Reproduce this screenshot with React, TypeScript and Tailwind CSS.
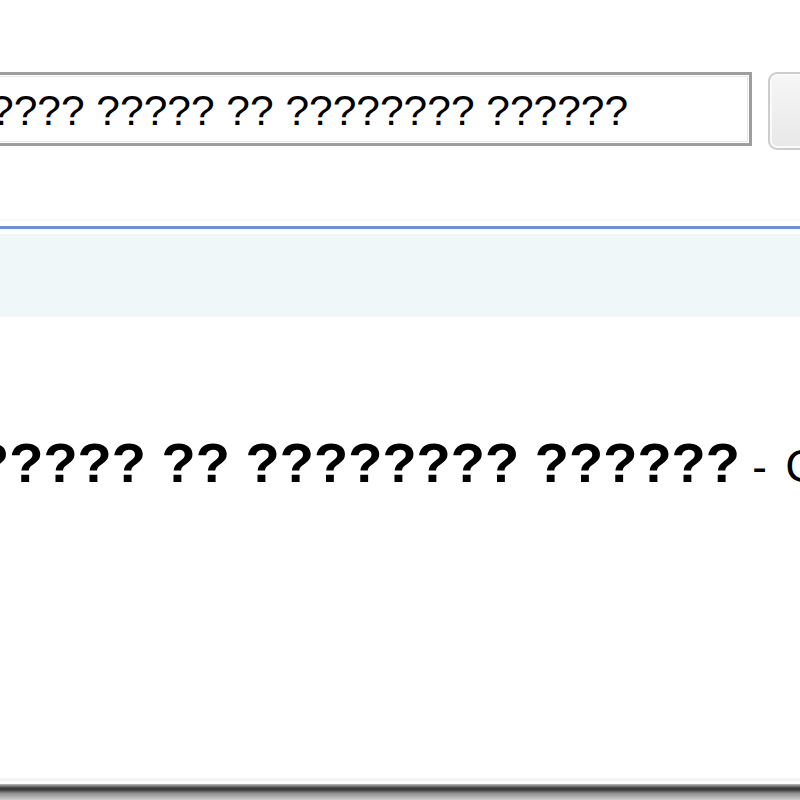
import React from "react";

export default function App() {
  return (
    <div className="w-[800px] h-[800px] overflow-hidden bg-white flex flex-col font-['Liberation_Sans',Arial,sans-serif] text-black">
      <div className="h-[72px] shrink-0" />
      <div className="h-[78px] shrink-0 flex items-start">
        <div className="ml-[-24px] w-[776px] h-[74px] shrink-0 border-[3px] border-[#9e9e9e] bg-white shadow-[inset_0_0_0_1px_#ffffff,inset_0_0_0_2px_#e6e6e6] pl-[11px] pt-[12px] text-[42.5px] leading-[48px] whitespace-nowrap overflow-hidden">
          ???? ????? ?? ???????? ??????
        </div>
        <div className="ml-[16px] w-[60px] h-[78px] shrink-0 rounded-[9px] border-2 border-[#cdcdcd] bg-[linear-gradient(to_bottom,#f6f6f6,#e8e8e8)] shadow-[inset_0_0_0_2px_#fafafa]" />
      </div>
      <div className="h-[69px] shrink-0" />
      <div className="h-[2px] shrink-0 bg-[#f6f7fc]" />
      <div className="h-[5px] shrink-0" />
      <div className="h-[3px] shrink-0 bg-[#6b90da]" />
      <div className="h-[5px] shrink-0" />
      <div className="h-[83px] shrink-0 bg-[#f0f7f9]" />
      <div className="h-[113px] shrink-0" />
      <div className="h-[66px] shrink-0 leading-[66px] whitespace-nowrap ml-[-25px]">
        <span className="text-[56px] font-bold">????? ?? ???????? ??????</span>
        <span className="text-[44px]">{"\u00a0-\u00a0"}</span>
        <span className="text-[46px] ml-[6px]">Google</span>
      </div>
      <div className="flex-1" />
      <div className="h-[3px] shrink-0 bg-[#f3f3f3]" />
      <div className="h-[3px] shrink-0" />
      <div className="h-[16px] shrink-0 bg-[linear-gradient(to_bottom,#bdbdbd_0px,#3c3c3c_4px,#3c3c3c_6px,#8a8a8a_9px,#cfcfcf_16px)]" />
    </div>
  );
}
